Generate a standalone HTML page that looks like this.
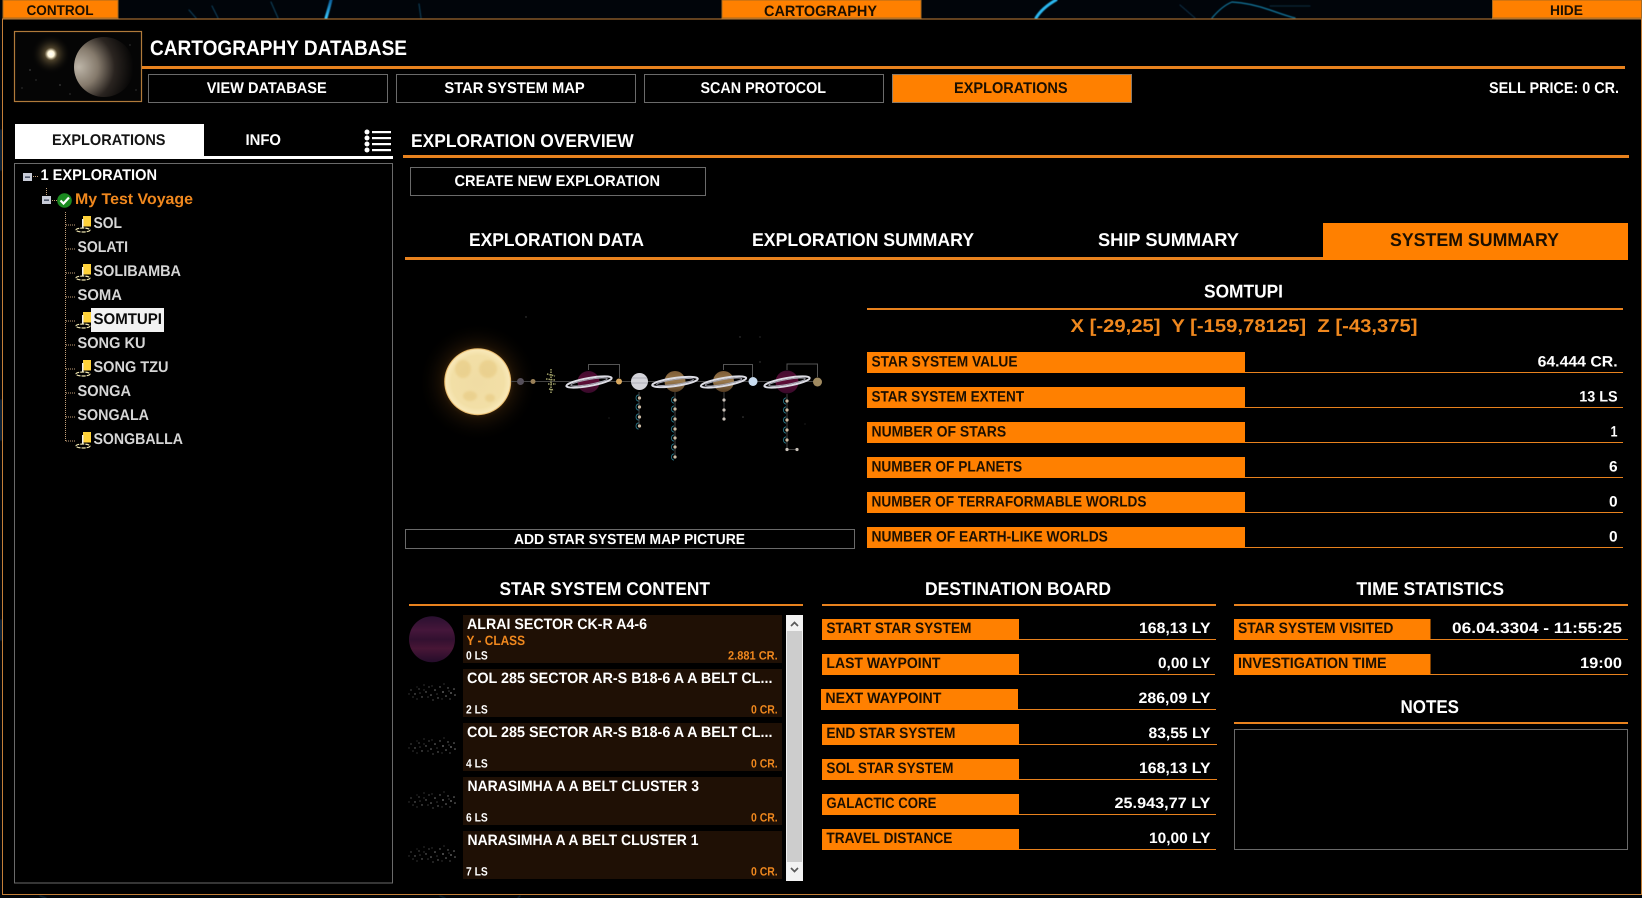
<!DOCTYPE html>
<html lang="en"><head><meta charset="utf-8"><title>Cartography Database</title>
<style>
html,body{margin:0;padding:0;background:#000;width:1642px;height:898px;overflow:hidden}
svg{display:block;filter:blur(.3px)}
text{font-family:"Liberation Sans",sans-serif;font-weight:700;fill:#fff;text-rendering:geometricPrecision;transform:translateY(-.8px)}
.d{fill:#1c0f00}.o{fill:#f0881e}.t{fill:#d6d6d6}
.n{fill:none;stroke:#6a6a6a;stroke-width:1}
.b{fill:#ff8000}.l{fill:#e8821e}
</style></head><body>
<svg width="1642" height="898" viewBox="0 0 1642 898" xmlns="http://www.w3.org/2000/svg">
<defs>
<filter id="bl" x="-20%" y="-20%" width="140%" height="140%"><feGaussianBlur stdDeviation="1"/></filter>
<filter id="bs" x="-20%" y="-20%" width="140%" height="140%"><feGaussianBlur stdDeviation=".5"/></filter>
<radialGradient id="sun" cx="50%" cy="50%" r="50%"><stop offset="0" stop-color="#f0dca4"/><stop offset=".78" stop-color="#f2dfa6"/><stop offset=".95" stop-color="#f8e8b8"/><stop offset="1" stop-color="#e0a850"/></radialGradient>
<radialGradient id="glow"><stop offset=".5" stop-color="#8a5a1c" stop-opacity=".45"/><stop offset=".62" stop-color="#4a2c0c" stop-opacity=".3"/><stop offset="1" stop-color="#000" stop-opacity="0"/></radialGradient>
<radialGradient id="star"><stop offset="0" stop-color="#fff"/><stop offset=".16" stop-color="#fff6d8"/><stop offset=".32" stop-color="#6a5a3a" stop-opacity=".7"/><stop offset="1" stop-color="#000" stop-opacity="0"/></radialGradient>
<radialGradient id="pl" cx="8%" cy="50%" r="92%"><stop offset="0" stop-color="#bdb5a8"/><stop offset=".35" stop-color="#857a6c"/><stop offset=".65" stop-color="#2a2420"/><stop offset="1" stop-color="#040404"/></radialGradient>
<linearGradient id="brown" x1="0" y1="0" x2="0" y2="1"><stop offset="0" stop-color="#7d5c36"/><stop offset=".5" stop-color="#9a7a4e"/><stop offset="1" stop-color="#553c22"/></linearGradient>
<linearGradient id="mar" x1="0" y1="0" x2="0" y2="1"><stop offset="0" stop-color="#420c30"/><stop offset=".5" stop-color="#5e0c36"/><stop offset="1" stop-color="#360a2a"/></linearGradient>
<linearGradient id="brd" x1="0" y1="0" x2="0" y2="1"><stop offset="0" stop-color="#2a1030"/><stop offset=".3" stop-color="#45163a"/><stop offset=".5" stop-color="#321030"/><stop offset=".7" stop-color="#481636"/><stop offset="1" stop-color="#240c2a"/></linearGradient>
<linearGradient id="sc" x1="0" y1="1" x2="0" y2="0"><stop offset="0" stop-color="#38c8ff"/><stop offset="1" stop-color="#0a5f9a"/></linearGradient>
<g id="flag">
<path d="M8 0h8v10.500h-8z" fill="#ffd23a"/><path d="M7 3h1.500v9H7z" fill="#eee"/>
<ellipse cx="8" cy="14" rx="7" ry="2" fill="none" stroke="#f0e6b0" stroke-width="1.200" stroke-dasharray="4 1"/>
</g>
<g id="minus"><rect width="9" height="8" fill="#c8ccd8"/><rect x="2" y="3.500" width="5" height="1.300" fill="#303a50"/></g>
<g id="moon"><circle r="1.600" fill="#c8b8a0"/><path d="M-1-3.200A3.300 3.300 0 0 0-1 3.200" fill="none" stroke="#2c7f90" stroke-width=".8"/></g>
<g id="belt" fill="#777">
<circle cx="3" cy="10" r=".6"/><circle cx="7" cy="14" r=".7"/><circle cx="11" cy="9" r=".6"/><circle cx="14" cy="17" r=".7"/><circle cx="18" cy="12" r=".7"/><circle cx="21" cy="7" r=".6"/><circle cx="23" cy="15" r=".8"/><circle cx="27" cy="10" r=".8"/><circle cx="30" cy="18" r=".7"/><circle cx="32" cy="7" r=".7"/><circle cx="35" cy="12" r=".9"/><circle cx="38" cy="16" r=".8"/><circle cx="40" cy="8" r=".7"/><circle cx="43" cy="13" r=".9"/><circle cx="46" cy="9" r=".8"/><circle cx="47" cy="15" r=".8"/><circle cx="9" cy="19" r=".5"/><circle cx="25" cy="20" r=".6"/><circle cx="36" cy="4" r=".5"/><circle cx="16" cy="5" r=".5"/><circle cx="42" cy="19" r=".6"/>
<g fill="#3a3a3a"><circle cx="5" cy="17" r=".8"/><circle cx="12" cy="13" r=".8"/><circle cx="20" cy="17" r=".8"/><circle cx="16" cy="10" r=".7"/><circle cx="29" cy="14" r=".8"/><circle cx="34" cy="19" r=".7"/><circle cx="41" cy="11" r=".8"/><circle cx="1" cy="14" r=".7"/><circle cx="24" cy="6" r=".7"/><circle cx="9" cy="7" r=".6"/></g>
</g>
<g id="ring"><ellipse cx="0" cy="0" rx="23" ry="4" fill="none" stroke="#dcdce4" stroke-width="2"/><ellipse cx="0" cy="0" rx="18.500" ry="2.400" fill="none" stroke="#a4a4b0" stroke-width="1"/></g>
</defs>

<rect width="1642" height="898" fill="#01050a"/>
<g fill="none" stroke-linecap="round" filter="url(#bs)">
<path d="M326 18Q329 8 331 0" stroke="url(#sc)" stroke-width="3"/>
<path d="M278 18L271 2M218 18L212 6M421 18L419 4M196 18L189 10" stroke="#0a3c56" stroke-width="1.200"/>
<path d="M1036 18Q1042 8 1056 0" stroke="#2ab8f0" stroke-width="3"/>
<path d="M1212 18Q1222 6 1232 2Q1250 3 1270 10T1295 18" stroke="#14789f" stroke-width="1.200"/>
<path d="M1270 6H1310" stroke="#082e40" stroke-width="1"/>
<path d="M60 12L30 18M1180 5L1195 18M40 896L46 898M440 896L445 898M520 896L518 898" stroke="#082a3c" stroke-width="1.200"/>
<path d="M1 130V170M1 400V440M1 620V640" stroke="#14324e" stroke-width="1.500"/>
</g>

<rect x="2.500" y="19" width="1639" height="875.500" fill="#000" stroke="#c47f38"/>

<rect x="3" y="0" width="115" height="18" class="b" stroke="#a86a20"/>
<text class="d" x="26.500" y="15.700" font-size="14" textLength="67" lengthAdjust="spacingAndGlyphs">CONTROL</text>
<rect x="722" y="0" width="199" height="18" class="b" stroke="#a86a20"/>
<text class="d" x="764" y="17" font-size="15" textLength="113" lengthAdjust="spacingAndGlyphs">CARTOGRAPHY</text>
<rect x="1492.500" y="0" width="149" height="18" class="b" stroke="#a86a20"/>
<text class="d" x="1550" y="15.700" font-size="14" textLength="33" lengthAdjust="spacingAndGlyphs">HIDE</text>

<rect x="14.500" y="31.500" width="127" height="70" fill="#050505" stroke="#b07a3a" stroke-width="1.200"/>
<circle cx="51" cy="54" r="20" fill="url(#star)"/>
<circle cx="104" cy="67" r="30" fill="url(#pl)"/>
<g fill="#777"><circle cx="30" cy="70" r=".6"/><circle cx="22" cy="88" r=".5"/><circle cx="60" cy="85" r=".6"/><circle cx="36" cy="80" r=".5"/><circle cx="70" cy="94" r=".5"/><circle cx="130" cy="45" r=".5"/><circle cx="136" cy="90" r=".5"/></g>

<text x="150" y="56" font-size="21" textLength="257" lengthAdjust="spacingAndGlyphs">CARTOGRAPHY DATABASE</text>
<rect x="142" y="66" width="1483" height="3" class="l"/>

<rect x="148.500" y="74.500" width="239" height="28" class="n"/>
<text x="206.700" y="94" font-size="15.500" textLength="120" lengthAdjust="spacingAndGlyphs">VIEW DATABASE</text>
<rect x="396.500" y="74.500" width="239" height="28" class="n"/>
<text x="444.400" y="94" font-size="15.500" textLength="140.300" lengthAdjust="spacingAndGlyphs">STAR SYSTEM MAP</text>
<rect x="644.500" y="74.500" width="239" height="28" class="n"/>
<text x="700.500" y="94" font-size="15.500" textLength="125.500" lengthAdjust="spacingAndGlyphs">SCAN PROTOCOL</text>
<rect x="892.500" y="74.500" width="239" height="28" class="b" stroke="#8a7a68"/>
<text class="d" x="954" y="94" font-size="15.500" textLength="113.600" lengthAdjust="spacingAndGlyphs">EXPLORATIONS</text>
<text x="1489" y="94" font-size="15.500" textLength="130" lengthAdjust="spacingAndGlyphs">SELL PRICE: 0 CR.</text>

<rect x="15" y="124" width="189" height="35" fill="#fff"/>
<rect x="204" y="156" width="189" height="3" fill="#fff"/>
<text x="52" y="146" font-size="15.500" textLength="113.500" lengthAdjust="spacingAndGlyphs" style="fill:#141414">EXPLORATIONS</text>
<text x="245.500" y="146" font-size="15.500" textLength="35.500" lengthAdjust="spacingAndGlyphs">INFO</text>
<g fill="#fff">
<circle cx="367" cy="132" r="2.500"/><circle cx="367" cy="138" r="2.500"/><circle cx="367" cy="144" r="2.500"/><circle cx="367" cy="150" r="2.500"/>
<rect x="372" y="131" width="19" height="2.200"/><rect x="372" y="137" width="19" height="2.200"/><rect x="372" y="143" width="19" height="2.200"/><rect x="372" y="149" width="19" height="2.200"/>
</g>

<rect x="14.500" y="163.500" width="378" height="719.500" class="n"/>
<g fill="none" stroke="#c4a078" stroke-width="1" stroke-dasharray="1 1">
<path d="M33 176.500H38M46.500 188V196M52 200.500H57M65.500 212V441M66 225H75M66 249H75M66 273H75M66 297H75M66 321H75M66 345H75M66 369H75M66 393H75M66 417H75M66 441H75"/>
</g>
<use href="#minus" x="23" y="173"/>
<text x="40.500" y="181" font-size="15.500" textLength="116.500" lengthAdjust="spacingAndGlyphs">1 EXPLORATION</text>
<use href="#minus" x="42" y="196"/>
<circle cx="64.500" cy="200.500" r="7.300" fill="#1a8a20"/>
<path d="M60.500 200.500l3 3 5.500-6" fill="none" stroke="#fff" stroke-width="2.200"/>
<text class="o" x="75" y="205" font-size="15.500" textLength="118" lengthAdjust="spacingAndGlyphs">My Test Voyage</text>

<use href="#flag" x="75" y="216"/><text class="t" x="93.500" y="229" font-size="15.500" textLength="28.500" lengthAdjust="spacingAndGlyphs">SOL</text>
<text class="t" x="77.500" y="253" font-size="15.500" textLength="50.500" lengthAdjust="spacingAndGlyphs">SOLATI</text>
<use href="#flag" x="75" y="264"/><text class="t" x="93.500" y="277" font-size="15.500" textLength="87.500" lengthAdjust="spacingAndGlyphs">SOLIBAMBA</text>
<text class="t" x="77.500" y="301" font-size="15.500" textLength="44.500" lengthAdjust="spacingAndGlyphs">SOMA</text>
<use href="#flag" x="75" y="312"/>
<rect x="91" y="308" width="73" height="24" fill="#f2f2f2"/>
<text x="93.500" y="325" font-size="15.500" textLength="68.500" lengthAdjust="spacingAndGlyphs" style="fill:#0a0a0a">SOMTUPI</text>
<text class="t" x="77.500" y="349" font-size="15.500" textLength="68" lengthAdjust="spacingAndGlyphs">SONG KU</text>
<use href="#flag" x="75" y="360"/><text class="t" x="93.500" y="373" font-size="15.500" textLength="75" lengthAdjust="spacingAndGlyphs">SONG TZU</text>
<text class="t" x="77.500" y="397" font-size="15.500" textLength="53.500" lengthAdjust="spacingAndGlyphs">SONGA</text>
<text class="t" x="77.500" y="421" font-size="15.500" textLength="71.500" lengthAdjust="spacingAndGlyphs">SONGALA</text>
<use href="#flag" x="75" y="432"/><text class="t" x="93.500" y="445" font-size="15.500" textLength="89.500" lengthAdjust="spacingAndGlyphs">SONGBALLA</text>

<text x="411" y="147.700" font-size="18.500" textLength="222.700" lengthAdjust="spacingAndGlyphs">EXPLORATION OVERVIEW</text>
<rect x="403" y="155" width="1226" height="3" class="l"/>
<rect x="410.500" y="167.500" width="295" height="28" class="n"/>
<text x="454.500" y="187" font-size="15.500" textLength="205.500" lengthAdjust="spacingAndGlyphs">CREATE NEW EXPLORATION</text>

<text x="469" y="247" font-size="18.500" textLength="175" lengthAdjust="spacingAndGlyphs">EXPLORATION DATA</text>
<text x="752" y="247" font-size="18.500" textLength="222" lengthAdjust="spacingAndGlyphs">EXPLORATION SUMMARY</text>
<text x="1098" y="247" font-size="18.500" textLength="141" lengthAdjust="spacingAndGlyphs">SHIP SUMMARY</text>
<rect x="405" y="257" width="918" height="3" class="l"/>
<rect x="1323" y="223" width="305" height="37" class="b"/>
<text class="d" x="1390" y="247" font-size="18.500" textLength="169" lengthAdjust="spacingAndGlyphs">SYSTEM SUMMARY</text>

<!-- system map -->
<circle cx="477.700" cy="381.700" r="60" fill="url(#glow)"/>
<circle cx="477.700" cy="381.700" r="33.500" fill="url(#sun)"/>
<g fill="#e2bf70" opacity=".4" filter="url(#bl)"><ellipse cx="463" cy="369" rx="8" ry="9"/><ellipse cx="488" cy="369" rx="9" ry="9"/><ellipse cx="470" cy="396" rx="7" ry="5"/><ellipse cx="490" cy="398" rx="5" ry="4"/></g>
<path d="M511 381.500H819" stroke="#444" stroke-width="1"/>
<circle cx="520.500" cy="381.500" r="3.500" fill="#56505a"/><circle cx="533" cy="381.500" r="2.500" fill="#9a8058"/>
<path d="M551 369v25M547 374l8 2M546 379l9 1M548 384l8 0M549 389l5 1" stroke="#a0a068" stroke-width="1.500" stroke-dasharray="1.500 1" fill="none"/>
<path d="M588.500 370V364.500H619.500V378M723.500 370V364.500H752.500V377M787 370V364H817.500V377" fill="none" stroke="#555" stroke-width="1"/>
<circle cx="588.500" cy="382" r="11" fill="url(#mar)"/><use href="#ring" transform="translate(589 382) rotate(-10)"/>
<circle cx="619" cy="381.500" r="3" fill="#d8a860"/>
<circle cx="639.500" cy="381.500" r="8.500" fill="#d4d4da"/><path d="M632 378h15M631.500 383h16" stroke="#aeaeb8" stroke-width="1"/>
<circle cx="675" cy="381.500" r="10.500" fill="url(#brown)"/><use href="#ring" transform="translate(675 382) rotate(-8)"/>
<circle cx="723.500" cy="381.500" r="10.500" fill="url(#brown)"/><use href="#ring" transform="translate(723.500 382) rotate(-10)"/>
<circle cx="753" cy="381.500" r="4.500" fill="#c8dcf0"/>
<circle cx="787" cy="382" r="11.500" fill="url(#mar)"/><use href="#ring" transform="translate(787 382) rotate(-10)"/>
<circle cx="817.500" cy="382" r="4.500" fill="#a08a60"/>
<path d="M639 392V426M675 392V457M724 392V419M787 394V449.500H797" fill="none" stroke="#555" stroke-width=".8"/>
<use href="#moon" x="639.500" y="398"/><use href="#moon" x="639.500" y="407"/><use href="#moon" x="639.500" y="417"/><use href="#moon" x="639.500" y="426"/>
<use href="#moon" x="675" y="400"/><use href="#moon" x="675" y="409"/><use href="#moon" x="675" y="419"/><use href="#moon" x="675" y="429"/><use href="#moon" x="675" y="438"/><use href="#moon" x="675" y="447"/><use href="#moon" x="675" y="457"/>
<circle cx="724" cy="400" r="1.600" fill="#c8c0b8"/><circle cx="724" cy="410" r="1.600" fill="#c8c0b8"/><circle cx="724" cy="419" r="1.600" fill="#c8c0b8"/>
<use href="#moon" x="787" y="401"/><use href="#moon" x="787" y="410"/><use href="#moon" x="787" y="420"/><use href="#moon" x="787" y="430"/><use href="#moon" x="787" y="440"/>
<circle cx="787" cy="449.500" r="1.600" fill="#c8c0b8"/><circle cx="797" cy="449.500" r="1.600" fill="#c8c0b8"/>
<g fill="#444"><circle cx="526" cy="317" r=".7"/><circle cx="740" cy="337" r=".7"/><circle cx="760" cy="337" r=".6"/><circle cx="760" cy="362" r=".7"/><circle cx="743" cy="417" r=".8"/><circle cx="609" cy="418" r=".5"/><circle cx="805" cy="424" r=".5"/></g>

<rect x="405.500" y="529.500" width="449" height="19" class="n"/>
<text x="514" y="545" font-size="14.500" textLength="231" lengthAdjust="spacingAndGlyphs">ADD STAR SYSTEM MAP PICTURE</text>

<!-- right stats -->
<text x="1204" y="298.300" font-size="18.500" textLength="79" lengthAdjust="spacingAndGlyphs">SOMTUPI</text>
<rect x="867" y="308" width="756" height="2" class="l"/>
<text class="o" x="1070.500" y="333" font-size="18.500" textLength="347" lengthAdjust="spacingAndGlyphs" xml:space="preserve">X [-29,25]  Y [-159,78125]  Z [-43,375]</text>

<g class="b"><rect x="867" y="352" width="378" height="21"/><rect x="867" y="387" width="378" height="21"/><rect x="867" y="422" width="378" height="21"/><rect x="867" y="457" width="378" height="21"/><rect x="867" y="492" width="378" height="21"/><rect x="867" y="527" width="378" height="21"/></g>
<g class="l"><rect x="1245" y="372" width="378" height="1"/><rect x="1245" y="407" width="378" height="1"/><rect x="1245" y="442" width="378" height="1"/><rect x="1245" y="477" width="378" height="1"/><rect x="1245" y="512" width="378" height="1"/><rect x="1245" y="547" width="378" height="1"/></g>
<text class="d" x="871.500" y="367.300" font-size="15" textLength="146" lengthAdjust="spacingAndGlyphs">STAR SYSTEM VALUE</text>
<text class="d" x="871.500" y="402.300" font-size="15" textLength="152.600" lengthAdjust="spacingAndGlyphs">STAR SYSTEM EXTENT</text>
<text class="d" x="871.500" y="437.300" font-size="15" textLength="134.700" lengthAdjust="spacingAndGlyphs">NUMBER OF STARS</text>
<text class="d" x="871.500" y="472.300" font-size="15" textLength="150.600" lengthAdjust="spacingAndGlyphs">NUMBER OF PLANETS</text>
<text class="d" x="871.500" y="507.300" font-size="15" textLength="275" lengthAdjust="spacingAndGlyphs">NUMBER OF TERRAFORMABLE WORLDS</text>
<text class="d" x="871.500" y="542.300" font-size="15" textLength="236.400" lengthAdjust="spacingAndGlyphs">NUMBER OF EARTH-LIKE WORLDS</text>
<text x="1537.600" y="367.300" font-size="15" textLength="80" lengthAdjust="spacingAndGlyphs">64.444 CR.</text>
<text x="1579.200" y="402.300" font-size="15" textLength="38.400" lengthAdjust="spacingAndGlyphs">13 LS</text>
<text x="1610.500" y="437.300" font-size="15" textLength="7" lengthAdjust="spacingAndGlyphs">1</text>
<text x="1609" y="472.300" font-size="15" textLength="8.600" lengthAdjust="spacingAndGlyphs">6</text>
<text x="1609" y="507.300" font-size="15" textLength="8.600" lengthAdjust="spacingAndGlyphs">0</text>
<text x="1609" y="542.300" font-size="15" textLength="8.600" lengthAdjust="spacingAndGlyphs">0</text>

<!-- star system content -->
<text x="499.500" y="596" font-size="18.500" textLength="210.500" lengthAdjust="spacingAndGlyphs">STAR SYSTEM CONTENT</text>
<rect x="409" y="604" width="394" height="2" class="l"/>
<g fill="#1f1005"><rect x="463" y="615" width="319" height="48"/><rect x="463" y="669" width="319" height="48"/><rect x="463" y="723" width="319" height="48"/><rect x="463" y="777" width="319" height="48"/><rect x="463" y="831" width="319" height="48"/></g>
<circle cx="432" cy="639.300" r="23" fill="url(#brd)"/>
<use href="#belt" x="408" y="680"/><use href="#belt" x="408" y="734"/><use href="#belt" x="408" y="788"/><use href="#belt" x="408" y="842"/>
<text x="467" y="630" font-size="15" textLength="180" lengthAdjust="spacingAndGlyphs">ALRAI SECTOR CK-R A4-6</text>
<text class="o" x="466.500" y="646" font-size="13.500" textLength="58.500" lengthAdjust="spacingAndGlyphs">Y - CLASS</text>
<text x="466" y="660.300" font-size="12" textLength="21.700" lengthAdjust="spacingAndGlyphs">0 LS</text>
<text class="o" x="728" y="660.300" font-size="12" textLength="49.700" lengthAdjust="spacingAndGlyphs">2.881 CR.</text>
<text x="467" y="684" font-size="15" textLength="305.500" lengthAdjust="spacingAndGlyphs">COL 285 SECTOR AR-S B18-6 A A BELT CL...</text>
<text x="466" y="714.300" font-size="12" textLength="21.700" lengthAdjust="spacingAndGlyphs">2 LS</text>
<text class="o" x="751" y="714.300" font-size="12" textLength="26.700" lengthAdjust="spacingAndGlyphs">0 CR.</text>
<text x="467" y="738" font-size="15" textLength="305.500" lengthAdjust="spacingAndGlyphs">COL 285 SECTOR AR-S B18-6 A A BELT CL...</text>
<text x="466" y="768.300" font-size="12" textLength="21.700" lengthAdjust="spacingAndGlyphs">4 LS</text>
<text class="o" x="751" y="768.300" font-size="12" textLength="26.700" lengthAdjust="spacingAndGlyphs">0 CR.</text>
<text x="467.500" y="792" font-size="15" textLength="231.500" lengthAdjust="spacingAndGlyphs">NARASIMHA A A BELT CLUSTER 3</text>
<text x="466" y="822.300" font-size="12" textLength="21.700" lengthAdjust="spacingAndGlyphs">6 LS</text>
<text class="o" x="751" y="822.300" font-size="12" textLength="26.700" lengthAdjust="spacingAndGlyphs">0 CR.</text>
<text x="467.500" y="846" font-size="15" textLength="231" lengthAdjust="spacingAndGlyphs">NARASIMHA A A BELT CLUSTER 1</text>
<text x="466" y="876.300" font-size="12" textLength="21.700" lengthAdjust="spacingAndGlyphs">7 LS</text>
<text class="o" x="751" y="876.300" font-size="12" textLength="26.700" lengthAdjust="spacingAndGlyphs">0 CR.</text>
<rect x="786" y="615" width="17" height="266" fill="#f2f2f2"/>
<rect x="787" y="631" width="15" height="231" fill="#cdcdcd"/>
<path d="M791 626l3.500-3.500 3.500 3.500M791 868l3.500 3.500 3.500-3.500" fill="none" stroke="#5a5a5a" stroke-width="1.700"/>

<!-- destination -->
<text x="925" y="596" font-size="18.500" textLength="186" lengthAdjust="spacingAndGlyphs">DESTINATION BOARD</text>
<rect x="822" y="604" width="394" height="2" class="l"/>
<g class="b"><rect x="822" y="619" width="197" height="21"/><rect x="822" y="654" width="197" height="21"/><rect x="821" y="689" width="197" height="21"/><rect x="822" y="724" width="197" height="21"/><rect x="822" y="759" width="197" height="21"/><rect x="822" y="794" width="197" height="21"/><rect x="822" y="829" width="197" height="21"/></g>
<g class="l"><rect x="1019" y="639" width="197" height="1"/><rect x="1019" y="674" width="196" height="1"/><rect x="1018" y="709" width="198" height="1"/><rect x="1019" y="744" width="198" height="1"/><rect x="1019" y="779" width="198" height="1"/><rect x="1019" y="814" width="197" height="1"/><rect x="1019" y="849" width="197" height="1"/></g>
<text class="d" x="826.400" y="634" font-size="15" textLength="145" lengthAdjust="spacingAndGlyphs">START STAR SYSTEM</text>
<text class="d" x="826.400" y="669" font-size="15" textLength="114" lengthAdjust="spacingAndGlyphs">LAST WAYPOINT</text>
<text class="d" x="825.400" y="704" font-size="15" textLength="116" lengthAdjust="spacingAndGlyphs">NEXT WAYPOINT</text>
<text class="d" x="826.400" y="739" font-size="15" textLength="129" lengthAdjust="spacingAndGlyphs">END STAR SYSTEM</text>
<text class="d" x="826.400" y="774" font-size="15" textLength="127" lengthAdjust="spacingAndGlyphs">SOL STAR SYSTEM</text>
<text class="d" x="826.400" y="809" font-size="15" textLength="110" lengthAdjust="spacingAndGlyphs">GALACTIC CORE</text>
<text class="d" x="826.400" y="844" font-size="15" textLength="126" lengthAdjust="spacingAndGlyphs">TRAVEL DISTANCE</text>
<text x="1139" y="634" font-size="15" textLength="71.500" lengthAdjust="spacingAndGlyphs">168,13 LY</text>
<text x="1158" y="669" font-size="15" textLength="52.500" lengthAdjust="spacingAndGlyphs">0,00 LY</text>
<text x="1138.500" y="704" font-size="15" textLength="72" lengthAdjust="spacingAndGlyphs">286,09 LY</text>
<text x="1148.500" y="739" font-size="15" textLength="62" lengthAdjust="spacingAndGlyphs">83,55 LY</text>
<text x="1139" y="774" font-size="15" textLength="71.500" lengthAdjust="spacingAndGlyphs">168,13 LY</text>
<text x="1114.500" y="809" font-size="15" textLength="96" lengthAdjust="spacingAndGlyphs">25.943,77 LY</text>
<text x="1149" y="844" font-size="15" textLength="61.500" lengthAdjust="spacingAndGlyphs">10,00 LY</text>

<!-- time -->
<text x="1356.400" y="596" font-size="18.500" textLength="147.600" lengthAdjust="spacingAndGlyphs">TIME STATISTICS</text>
<rect x="1234" y="604" width="394" height="2" class="l"/>
<g class="b"><rect x="1234" y="619" width="196.500" height="21"/><rect x="1234" y="654" width="196.500" height="21"/></g>
<g class="l"><rect x="1430" y="639" width="198" height="1"/><rect x="1430" y="674" width="198" height="1"/></g>
<text class="d" x="1238" y="634" font-size="15" textLength="155.400" lengthAdjust="spacingAndGlyphs">STAR SYSTEM VISITED</text>
<text class="d" x="1238" y="669" font-size="15" textLength="148.600" lengthAdjust="spacingAndGlyphs">INVESTIGATION TIME</text>
<text x="1452" y="634" font-size="15" textLength="170" lengthAdjust="spacingAndGlyphs">06.04.3304 - 11:55:25</text>
<text x="1580" y="669" font-size="15" textLength="42" lengthAdjust="spacingAndGlyphs">19:00</text>
<text x="1400.500" y="714" font-size="18.500" textLength="58.500" lengthAdjust="spacingAndGlyphs">NOTES</text>
<rect x="1234" y="722" width="394" height="2" class="l"/>
<rect x="1234.500" y="729.500" width="393" height="120" class="n"/>
</svg>
</body></html>
